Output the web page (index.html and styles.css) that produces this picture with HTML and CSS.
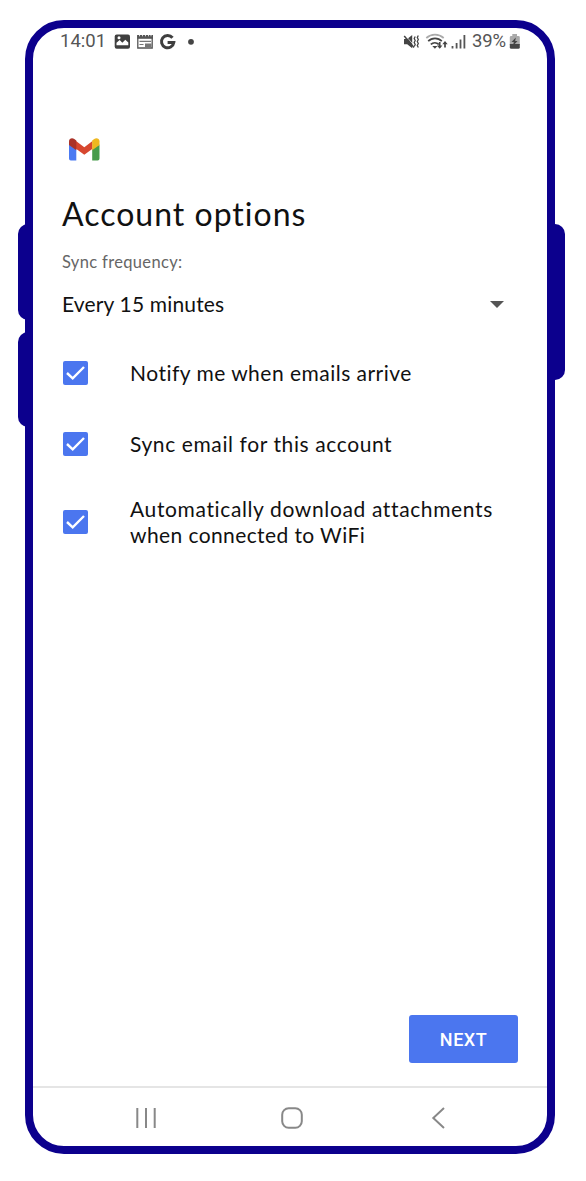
FILE: index.html
```html
<!DOCTYPE html>
<html lang="en">
<head>
<meta charset="utf-8">
<title>Account options</title>
<link rel="stylesheet" href="styles.css">
</head>
<body>
<div class="phone">
  <span class="side-key volume-up"></span>
  <span class="side-key volume-down"></span>
  <span class="side-key power"></span>
  <div class="screen">
    <header class="status">
      <span class="clock">14:01</span>
      <svg class="notices" width="84" height="20" viewBox="112 31.500 84 20">
        <rect x="114.700" y="34" width="15.300" height="14.300" rx="2" fill="#3f3f3f"/>
        <path d="M116.500 44.800v-2.600l3.200-2.600 2.600 2.600 3-3 3 2.800v2.800z" fill="#fff"/>
        <circle cx="119" cy="37.300" r="1.500" fill="#fff"/>
        <path d="M137.800 35.500h14.400v12H137.800z" fill="none" stroke="#555" stroke-width="1.300"/>
        <path d="M137.200 34.500h15.800v3.800h-15.800z" fill="#555"/>
        <path d="M139.500 33.800v2M142.500 33.800v2M145.500 33.800v2M148.500 33.800v2M151 33.800v2" stroke="#fff" stroke-width=".8"/>
        <path d="M139.500 40.800h11.500M139.500 44h4" stroke="#777" stroke-width="1.200"/>
        <path d="M145 43h6.500v4H145z" fill="#777"/>
        <path d="M172.500 37.200A6.200 6.200 0 1 0 173.800 42H167.600" fill="none" stroke="#3f3f3f" stroke-width="3"/>
        <circle cx="191" cy="41.300" r="2.900" fill="#444"/>
      </svg>
      <svg class="signals" width="66" height="20" viewBox="402 31.500 66 20">
        <path d="M404 38.500h3.200l5-4v13.300l-5-4H404z" fill="#444"/>
        <path d="M405.200 34.700l9 10.500" stroke="#fff" stroke-width=".7"/>
        <path d="M404.200 35.500l9.800 11.500" stroke="#444" stroke-width="1.500"/>
        <path d="M415.200 36l-1 2 1 2-1 2 1 2-1 2M418.300 35l-1 2 1 2-1 2 1 2-1 2 1 2" fill="none" stroke="#444" stroke-width="1.300"/>
        <g fill="none" stroke-width="1.700">
          <path d="M426.300 37.500a13 13 0 0 1 17.400 0" stroke="#aaa"/>
          <path d="M428.200 40.700a9.500 9.500 0 0 1 13.600 0M430.800 43.800a6 6 0 0 1 8 0" stroke="#444"/>
          <path d="M439.700 41.500v5.500M445 47v-5.500" stroke="#444"/>
        </g>
        <path d="M432.300 45.500h5.200l-2.600 2.700zM437 45h5.400l-2.700 3.300zM442.300 43.800h5.400L445 40.500z" fill="#444"/>
        <path d="M452.500 45.500v2.500M456.600 42.500v5.500M460.500 39v9M464.400 34.500v13.500" stroke="#555" stroke-width="1.800"/>
      </svg>
      <span class="percent">39%</span>
      <svg class="battery" width="12" height="18" viewBox="509 32.500 12 18">
        <path d="M512.300 33.500h4.700v2h1.500q1.300 0 1.300 1.300v7.700h-10v-7.700q0-1.300 1.300-1.300h1.200z" fill="#aaa"/>
        <path d="M509.800 43.500h10v3.200q0 1.500-1.500 1.500h-7q-1.500 0-1.500-1.500z" fill="#444"/>
        <path d="M515.800 37l-4.300 4.500h2.300l-.8 3.700 4.600-4.700h-2.400z" fill="#444"/>
      </svg>
    </header>
    <main class="content">
      <svg class="gmail" width="31" height="23" viewBox="0 0 31 23">
        <path d="M0 6.500L7.300 11V22.500H2.200A2 2 0 0 1 0 20.500z" fill="#4b7af2"/>
        <path d="M30.500 6.500L23.200 11V22.500h5.100a2 2 0 0 0 2.200-2z" fill="#479b4b"/>
        <path d="M7 3l8.300 6.200L23.500 3v7.800l-8.200 6L7 10.800z" fill="#d7472f"/>
        <path d="M0 7V3.300C0 .5 3-.8 5.300.9L7.300 2.600v9.600z" fill="#aa3329"/>
        <path d="M30.500 7V3.300c0-2.800-3-4.100-5.300-2.400l-2 1.700v9.600z" fill="#efb820"/>
      </svg>
      <h1 class="title">Account options</h1>
      <label class="label">Sync frequency:</label>
      <div class="select">
        <span class="value">Every 15 minutes</span>
        <svg class="arrow" width="14" height="7" viewBox="0 0 14 7"><path d="M0 0h14L7 7z" fill="#555"/></svg>
      </div>
      <div class="option">
        <svg class="box" width="25" height="24" viewBox="0 0 25 24"><rect width="25" height="24" rx="2" fill="#4b76ef"/><path d="M4 12l5.700 5.300L21 6" fill="none" stroke="#fff" stroke-width="2.400"/></svg>
        <span class="text notify">Notify me when emails arrive</span>
      </div>
      <div class="option">
        <svg class="box" width="25" height="24" viewBox="0 0 25 24"><rect width="25" height="24" rx="2" fill="#4b76ef"/><path d="M4 12l5.700 5.300L21 6" fill="none" stroke="#fff" stroke-width="2.400"/></svg>
        <span class="text sync">Sync email for this account</span>
      </div>
      <div class="option tall">
        <svg class="box" width="25" height="24" viewBox="0 0 25 24"><rect width="25" height="24" rx="2" fill="#4b76ef"/><path d="M4 12l5.700 5.300L21 6" fill="none" stroke="#fff" stroke-width="2.400"/></svg>
        <span class="text"><span class="download">Automatically download attachments</span><br><span class="wifi">when connected to WiFi</span></span>
      </div>
      <button class="next">NEXT</button>
    </main>
    <nav class="nav">
      <svg width="22" height="22" viewBox="0 0 22 22"><path d="M2.300 1v20M11 1v20M19.700 1v20" stroke="#888" stroke-width="2"/></svg>
      <svg width="22" height="22" viewBox="0 0 22 22"><rect x="1.200" y="1.200" width="19.600" height="19.600" rx="6.500" fill="none" stroke="#888" stroke-width="2"/></svg>
      <svg width="22" height="22" viewBox="0 0 22 22"><path d="M17 1L6.300 11 17 21" fill="none" stroke="#888" stroke-width="2"/></svg>
    </nav>
  </div>
</div>
</body>
</html>
```
FILE: styles.css
```css
* { box-sizing: border-box; }
body {
  margin: 0;
  padding: 20px 31px 27px 25px;
  background: #fff;
  font-family: Lato, "Open Sans", sans-serif;
  color: #111;
}
.phone { position: relative; width: 530px; height: 1134px; }
.side-key { position: absolute; background: #0c008d; width: 20px; }
.volume-up { left: -7px; top: 204px; height: 96px; border-radius: 10px 0 0 10px; }
.volume-down { left: -7px; top: 312px; height: 95px; border-radius: 10px 0 0 10px; }
.power { right: -10px; top: 204px; height: 156px; border-radius: 0 10px 10px 0; }
.screen {
  position: relative;
  height: 100%;
  display: flex;
  flex-direction: column;
  border: 8px solid #0c008d;
  border-radius: 39px;
  background: #fff;
}
.status {
  display: flex;
  align-items: center;
  height: 27px;
  padding: 0 26px 0 27px;
  font: 18.500px/27px Roboto, sans-serif;
  color: #555;
}
.clock { width: 52px; }
.signals { margin-left: auto; }
.percent { width: 37px; margin-left: 4px; letter-spacing: -.1px; }
.content {
  flex: 1;
  display: flex;
  flex-direction: column;
  padding: 83px 29px 23px 29px;
}
.gmail { margin-left: 7px; }
.title {
  margin: 33px 0 0;
  font-size: 32px;
  line-height: 40px;
  font-weight: 400;
  letter-spacing: 1px;
  white-space: nowrap;
}
.label { margin-top: 18px; font-size: 16.500px; line-height: 20px; color: #666; letter-spacing: .34px; }
.select {
  display: flex;
  align-items: center;
  justify-content: space-between;
  height: 28px;
  margin-top: 17px;
  padding-right: 14px;
  font-size: 21px;
  letter-spacing: .16px;
}
.arrow { margin-top: 3px; }
.option { display: flex; align-items: center; height: 71px; gap: 42px; padding-left: 1px; }
.select + .option { margin-top: 20px; }
.tall { height: 86px; }
.text { font-size: 21px; line-height: 26px; white-space: nowrap; }
.notify { letter-spacing: .48px; }
.sync { letter-spacing: .6px; }
.download { letter-spacing: .63px; }
.wifi { letter-spacing: .4px; }
.next {
  align-self: flex-end;
  width: 109px;
  height: 48px;
  margin-top: auto;
  padding: 2px 0 0;
  border: 0;
  border-radius: 3px;
  background: #4b76ef;
  color: #fff;
  font: 500 18px/1 Roboto, sans-serif;
  letter-spacing: .5px;
}
.nav {
  height: 60px;
  display: flex;
  align-items: center;
  justify-content: space-between;
  padding: 1px 98px 0 102px;
  border-top: 2px solid #e5e5e5;
}
```
